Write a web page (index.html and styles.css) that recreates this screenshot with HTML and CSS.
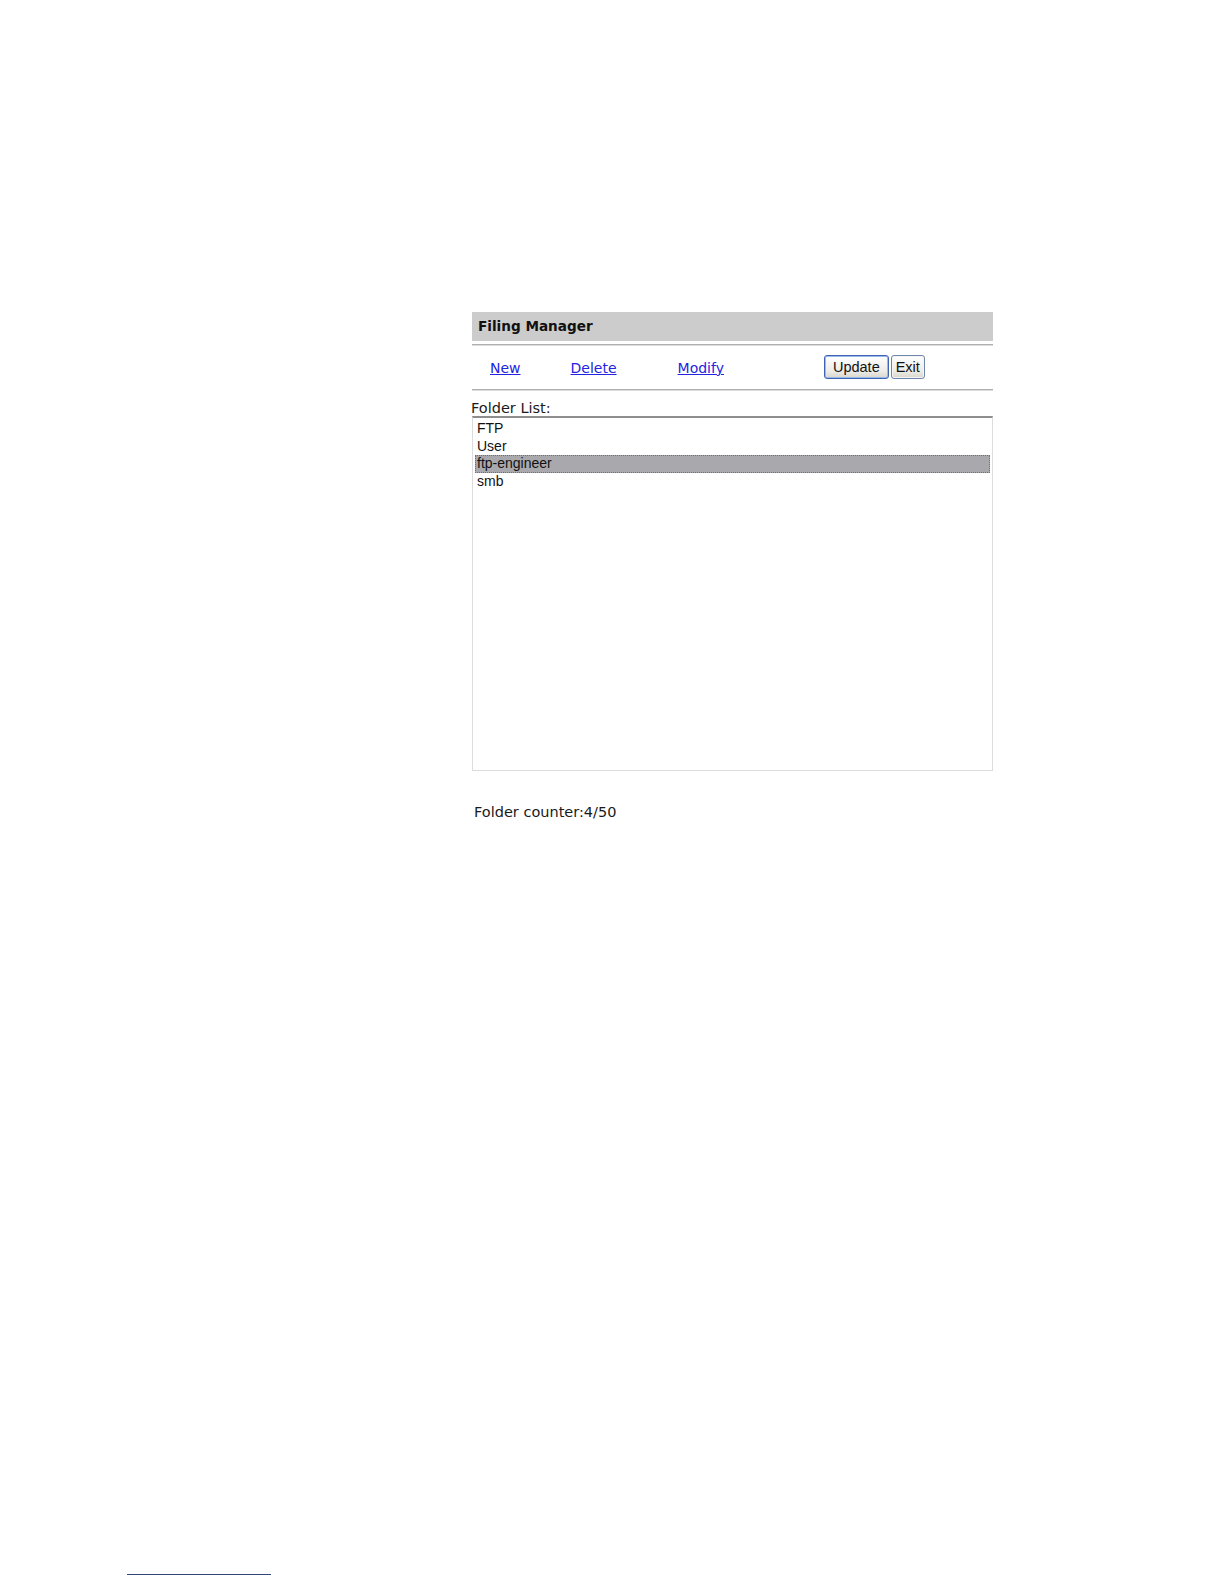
FILE: index.html
```html
<!DOCTYPE html>
<html>
<head>
<meta charset="utf-8">
<title>Filing Manager</title>
<link rel="stylesheet" href="styles.css">
</head>
<body>
<div class="page">
  <div class="panel">
    <div class="title">Filing Manager</div>
    <div class="rule"></div>
    <div class="toolbar">
      <a class="link link-new" href="#">New</a>
      <a class="link link-delete" href="#">Delete</a>
      <a class="link link-modify" href="#">Modify</a>
      <div class="buttons">
        <button class="btn btn-focus" type="button">Update</button>
        <button class="btn btn-exit" type="button">Exit</button>
      </div>
    </div>
    <div class="rule"></div>
    <div class="label">Folder List:</div>
    <div class="listbox">
      <div class="item">FTP</div>
      <div class="item">User</div>
      <div class="item selected">ftp-engineer</div>
      <div class="item">smb</div>
    </div>
    <div class="counter">Folder counter:4/50</div>
  </div>
  <div class="footnote-rule"></div>
</div>
</body>
</html>
```
FILE: styles.css
```css
html, body {
  margin: 0;
  padding: 0;
  background: #ffffff;
}

.page {
  position: relative;
  width: 1224px;
  height: 1584px;
  font-family: "DejaVu Sans", Verdana, sans-serif;
  color: #1a1a1a;
}

.panel {
  padding-top: 312px;
  margin-left: 472px;
  width: 521px;
}

.title {
  height: 29px;
  background: #cccccc;
  font-weight: bold;
  font-size: 13.6px;
  line-height: 29px;
  padding-left: 6px;
  color: #111;
}

.rule {
  margin-top: 3px;
  height: 1px;
  background: #b0b0b0;
  border-bottom: 1px solid #dcdcdc;
}

.toolbar {
  display: flex;
  align-items: center;
  height: 40px;
}

.link {
  font-size: 14px;
  color: #2323e0;
  text-decoration: underline;
  padding-top: 3px;
}

.link-new { margin-left: 18px; }
.link-delete { margin-left: 50px; }
.link-modify { margin-left: 61px; }

.buttons {
  display: flex;
  gap: 2px;
  margin-left: 100px;
  padding-top: 1px;
}

.btn {
  font-family: "Liberation Sans", Arial, sans-serif;
  font-size: 14.5px;
  color: #111;
  height: 24px;
  padding: 0 7px;
  border: 1px solid #6f86ad;
  border-radius: 3px;
  background: linear-gradient(#ffffff, #ecebe6 70%, #d8d6cc);
  box-shadow: inset 0 0 0 1px #f4f4f4;
}

.btn-exit {
  padding: 0 4px;
}

.btn-focus {
  border-color: #3c63b4;
  box-shadow: inset 0 0 0 1px #9ab8e8;
  padding: 0 8px;
}

.label {
  font-size: 14.5px;
  margin-top: 9px;
  margin-left: -1px;
  line-height: 16px;
  color: #1a1a1a;
}

.listbox {
  height: 355px;
  border-top: 2px solid #8e8e8e;
  border-left: 1px solid #dcdcdc;
  border-right: 1px solid #dcdcdc;
  border-bottom: 1px solid #dcdcdc;
  padding: 2px 2px 0 2px;
  box-sizing: border-box;
  font-family: "Liberation Sans", Arial, sans-serif;
  font-size: 14px;
  color: #111;
}

.item {
  height: 17.5px;
  line-height: 17px;
  padding-left: 2px;
  box-sizing: border-box;
}

.item.selected {
  background: #a9a9ad;
  border: 1px dotted #6e6e6e;
  padding-left: 1px;
  line-height: 15px;
}

.counter {
  font-size: 14.5px;
  margin-top: 33px;
  margin-left: 2px;
  color: #1a1a1a;
}

.footnote-rule {
  position: absolute;
  left: 127px;
  top: 1574px;
  width: 144px;
  height: 1px;
  background: #34457e;
}
```
